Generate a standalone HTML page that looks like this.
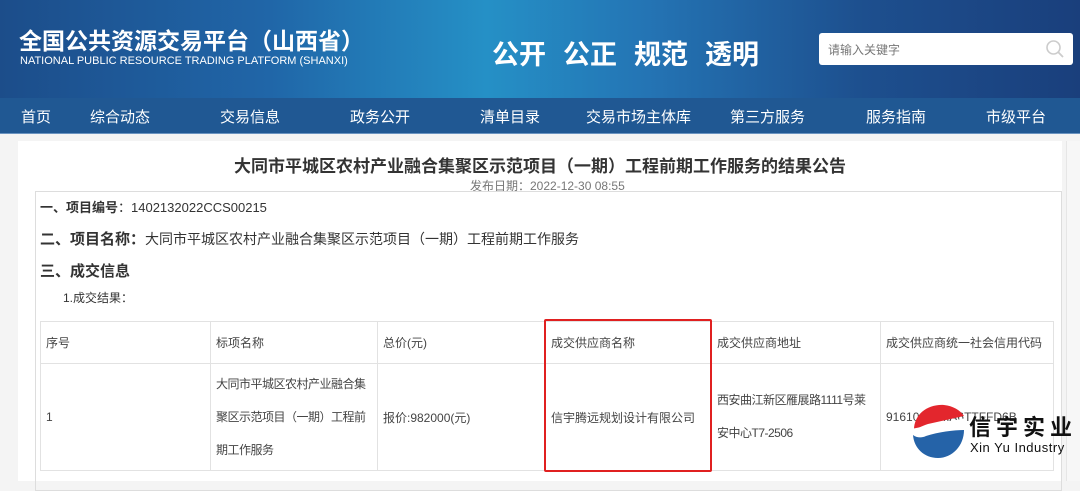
<!DOCTYPE html>
<html><head><meta charset="utf-8"><style>
*{margin:0;padding:0;box-sizing:border-box}
body{width:1080px;height:474px;overflow:hidden;background:#f4f4f4;font-family:"Liberation Sans","Noto Sans CJK SC",sans-serif;color:#333;position:relative}
.hd{position:absolute;left:0;top:0;width:1080px;height:98px;background:linear-gradient(90deg,#1c4d8a 0%,#2066a8 25%,#2590c6 45%,#2474b4 60%,#1d4f8e 80%,#1a3f7c 100%)}
.t1{position:absolute;left:19px;top:22px;font-size:23px;font-weight:bold;color:#fff}
.t2{position:absolute;left:20px;top:55px;font-size:11px;color:#fff}
.slg{position:absolute;left:492px;top:33px;font-size:27px;font-weight:bold;color:#fff}
.slg span{margin-right:17px}
.srch{position:absolute;left:819px;top:33px;width:254px;height:32px;background:#fff;border-radius:3px;font-size:12px;color:#777;padding:8px 9px}
.nav{position:absolute;left:0;top:98px;width:1080px;height:36px;background:#205893;border-bottom:1px solid #6a93c0}
.nav span{position:absolute;top:8px;font-size:15px;color:#fff}
.pn{position:absolute;left:18px;top:141px;width:1044px;height:340px;background:#fff}
.ttl{position:absolute;left:0;width:1080px;top:152px;text-align:center;font-size:17px;font-weight:bold;color:#333}
.dt{position:absolute;left:470px;top:177px;font-size:12px;color:#777}
.box{position:absolute;left:35px;top:191px;width:1027px;height:300px;border:1px solid #ddd}
.l{position:absolute;font-size:13px;color:#333}
table{position:absolute;left:40px;top:321px;border-collapse:collapse;font-size:12px;color:#444;table-layout:fixed;width:1013px}
td{border:1px solid #e2e2e2;padding:0 5px;vertical-align:middle;overflow:hidden}
.rb{position:absolute;left:544px;top:319px;width:168px;height:153px;border:2px solid #e02020;border-radius:2px}
</style></head><body>
<div class="hd">
<div class="t1">全国公共资源交易平台（山西省）</div>
<div class="t2">NATIONAL PUBLIC RESOURCE TRADING PLATFORM (SHANXI)</div>
<div class="slg"><span>公开</span><span>公正</span><span>规范</span><span>透明</span></div>
<div class="srch">请输入关键字
<svg style="position:absolute;right:8px;top:6px" width="20" height="20" viewBox="0 0 20 20"><circle cx="8.5" cy="8.5" r="6.5" fill="none" stroke="#ccc" stroke-width="1.6"/><path d="M13.3 13.3L18 18" stroke="#ccc" stroke-width="1.8"/></svg></div>
</div>
<div class="nav">
<span style="left:21px">首页</span><span style="left:90px">综合动态</span><span style="left:220px">交易信息</span><span style="left:350px">政务公开</span><span style="left:480px">清单目录</span><span style="left:586px">交易市场主体库</span><span style="left:730px">第三方服务</span><span style="left:866px">服务指南</span><span style="left:986px">市级平台</span>
</div>
<div class="pn"></div>
<div style="position:absolute;left:1066px;top:141px;width:14px;height:340px;background:#f7f7f7;border-left:1px solid #e6e6e6"></div>
<div class="ttl">大同市平城区农村产业融合集聚区示范项目（一期）工程前期工作服务的结果公告</div>
<div class="dt">发布日期：2022-12-30 08:55</div>
<div class="box"></div>
<div class="l" style="left:40px;top:197px"><b>一、项目编号</b>：1402132022CCS00215</div>
<div class="l" style="left:40px;top:228px;font-size:14px"><b style="font-size:15px">二、项目名称：</b>大同市平城区农村产业融合集聚区示范项目（一期）工程前期工作服务</div>
<div class="l" style="left:40px;top:260px;font-size:15px;font-weight:bold">三、成交信息</div>
<div class="l" style="left:63px;top:289px;font-size:12px">1.成交结果：</div>
<table>
<colgroup><col style="width:170px"><col style="width:167px"><col style="width:168px"><col style="width:166px"><col style="width:169px"><col style="width:173px"></colgroup>
<tr style="height:42px"><td>序号</td><td>标项名称</td><td>总价(元)</td><td>成交供应商名称</td><td>成交供应商地址</td><td style="white-space:nowrap">成交供应商统一社会信用代码</td></tr>
<tr style="height:107px"><td>1</td><td style="line-height:33px;letter-spacing:-0.5px">大同市平城区农村产业融合集聚区示范项目（一期）工程前期工作服务</td><td>报价:982000(元)</td><td style="white-space:nowrap">信宇腾远规划设计有限公司</td><td style="line-height:33px;letter-spacing:-0.5px">西安曲江新区雁展路1111号莱安中心T7-2506</td><td>91610000MA6TTFFD6B</td></tr>
</table>
<div class="rb"></div>
<svg style="position:absolute;left:908px;top:402px" width="60" height="58" viewBox="0 0 60 58">
<path d="M6 28 C6 12 20 2 36 3 C45 4 52 8 56 14 L20 22 C14 24 8 27 6 28Z" fill="#e3262d"/>
<path d="M6 28 L56 18" stroke="#fff" stroke-width="3"/>
<path d="M18 34 C30 30 46 28 56 28 C56 44 44 56 30 56 C16 56 6 46 5 33 C9 36 14 36 18 34Z" fill="#2563a8"/>
</svg>
<div style="position:absolute;left:969px;top:410px;font-size:22px;font-weight:bold;color:#111;letter-spacing:5px;font-family:'Noto Sans CJK SC',sans-serif">信宇实业</div>
<div style="position:absolute;left:970px;top:440px;font-size:13px;color:#111;letter-spacing:.5px">Xin Yu Industry</div>
</body></html>
